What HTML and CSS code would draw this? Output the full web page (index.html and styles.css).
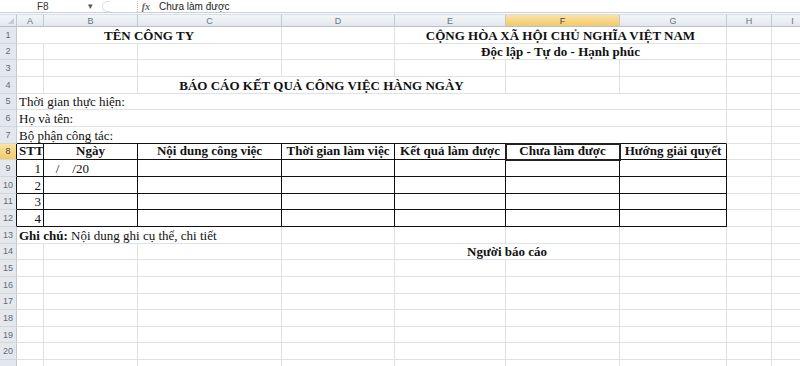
FILE: index.html
```html
<!DOCTYPE html>
<html>
<head>
    <title>Báo cáo công việc</title>
    <link rel="stylesheet" href="styles.css">
</head>
<body>
    <div class="formula-bar">
        <div class="name-box">F8</div>
        <div class="name-arrow">▾</div>
        <div class="fx-zone">
            <span class="fx-bracket"></span>
            <span class="fx">fx</span>
        </div>
        <div class="formula-text">Chưa làm được</div>
    </div>

    <table class="sheet">
        <colgroup>
            <col class="c-head">
            <col class="c-a">
            <col class="c-b">
            <col class="c-c">
            <col class="c-d">
            <col class="c-e">
            <col class="c-f">
            <col class="c-g">
            <col class="c-h">
            <col class="c-i">
        </colgroup>
        <tr class="col-heads">
            <th class="corner"><span class="corner-tri"></span></th>
            <th>A</th><th>B</th><th>C</th><th>D</th><th>E</th>
            <th class="active">F</th><th>G</th><th>H</th><th>I</th>
        </tr>
        <tr>
            <th>1</th>
            <td colspan="3" class="bold center">TÊN CÔNG TY</td>
            <td></td>
            <td colspan="3" class="bold center">CỘNG HÒA XÃ HỘI CHỦ NGHĨA VIỆT NAM</td>
            <td></td><td></td>
        </tr>
        <tr>
            <th>2</th>
            <td></td><td></td><td></td><td></td>
            <td colspan="3" class="bold center">Độc lập - Tự do - Hạnh phúc</td>
            <td></td><td></td>
        </tr>
        <tr>
            <th>3</th>
            <td></td><td></td><td></td><td></td><td></td><td></td><td></td><td></td><td></td>
        </tr>
        <tr>
            <th>4</th>
            <td></td><td></td>
            <td colspan="3" class="bold center">BÁO CÁO KẾT QUẢ CÔNG VIỆC HÀNG NGÀY</td>
            <td></td><td></td><td></td><td></td>
        </tr>
        <tr>
            <th>5</th>
            <td colspan="7">Thời gian thực hiện:</td>
            <td></td><td></td>
        </tr>
        <tr>
            <th>6</th>
            <td colspan="7">Họ và tên:</td>
            <td></td><td></td>
        </tr>
        <tr class="before-table">
            <th>7</th>
            <td colspan="7">Bộ phận công tác:</td>
            <td></td><td></td>
        </tr>
        <tr class="report head-row">
            <th class="active">8</th>
            <td class="bold center">STT</td>
            <td class="bold center">Ngày</td>
            <td class="bold center">Nội dung công việc</td>
            <td class="bold center">Thời gian làm việc</td>
            <td class="bold center">Kết quả làm được</td>
            <td class="bold center selected">Chưa làm được</td>
            <td class="bold center">Hướng giải quyết</td>
            <td></td><td></td>
        </tr>
        <tr class="report">
            <th>9</th>
            <td class="num">1</td>
            <td class="date">   /    /20</td>
            <td></td><td></td><td></td><td></td><td></td>
            <td></td><td></td>
        </tr>
        <tr class="report">
            <th>10</th>
            <td class="num">2</td>
            <td></td><td></td><td></td><td></td><td></td><td></td>
            <td></td><td></td>
        </tr>
        <tr class="report">
            <th>11</th>
            <td class="num">3</td>
            <td></td><td></td><td></td><td></td><td></td><td></td>
            <td></td><td></td>
        </tr>
        <tr class="report last">
            <th>12</th>
            <td class="num">4</td>
            <td></td><td></td><td></td><td></td><td></td><td></td>
            <td></td><td></td>
        </tr>
        <tr>
            <th>13</th>
            <td colspan="3"><b>Ghi chú:</b> Nội dung ghi cụ thể, chi tiết</td>
            <td></td><td></td><td></td><td></td><td></td><td></td>
        </tr>
        <tr>
            <th>14</th>
            <td></td><td></td><td></td><td></td>
            <td colspan="2" class="bold center">Người báo cáo</td>
            <td></td><td></td><td></td>
        </tr>
        <tr><th>15</th><td></td><td></td><td></td><td></td><td></td><td></td><td></td><td></td><td></td></tr>
        <tr><th>16</th><td></td><td></td><td></td><td></td><td></td><td></td><td></td><td></td><td></td></tr>
        <tr><th>17</th><td></td><td></td><td></td><td></td><td></td><td></td><td></td><td></td><td></td></tr>
        <tr><th>18</th><td></td><td></td><td></td><td></td><td></td><td></td><td></td><td></td><td></td></tr>
        <tr><th>19</th><td></td><td></td><td></td><td></td><td></td><td></td><td></td><td></td><td></td></tr>
        <tr><th>20</th><td></td><td></td><td></td><td></td><td></td><td></td><td></td><td></td><td></td></tr>
        <tr><th></th><td></td><td></td><td></td><td></td><td></td><td></td><td></td><td></td><td></td></tr>
    </table>
</body>
</html>
```

FILE: styles.css
```css
* {
    margin: 0;
    padding: 0;
    box-sizing: border-box;
}

body {
    width: 800px;
    height: 366px;
    overflow: hidden;
    background: #fff;
    font-family: 'Liberation Serif', serif;
}

/* formula bar */

.formula-bar {
    height: 13px;
    display: flex;
    align-items: center;
    background: #fff;
    border-bottom: 1px solid #c9ced6;
    font-family: 'Liberation Sans', sans-serif;
    font-size: 10px;
    color: #333;
}

.name-box {
    width: 86px;
    padding-left: 37px;
}

.name-arrow {
    width: 14px;
    font-size: 9px;
    color: #555;
    padding-left: 2px;
}

.fx-zone {
    width: 59px;
    display: flex;
    align-items: center;
    height: 100%;
}

.fx-bracket {
    width: 8px;
    height: 11px;
    border: 1px solid #dde1e6;
    border-right: none;
    border-radius: 6px 0 0 6px;
    margin-left: 2px;
}

.fx {
    margin-left: auto;
    margin-right: 9px;
    font-family: 'Liberation Serif', serif;
    font-style: italic;
    font-weight: bold;
    font-size: 10px;
    color: #666;
    border-left: 1px dotted #bbb;
    padding-left: 4px;
}

.formula-text {
    font-size: 10px;
    color: #222;
}

/* sheet */

.sheet {
    table-layout: fixed;
    border-collapse: separate;
    border-spacing: 0;
    width: 814px;
    margin-top: 1px;
}

.c-head { width: 17px; }
.c-a { width: 27px; }
.c-b { width: 94px; }
.c-c { width: 144px; }
.c-d { width: 113px; }
.c-e { width: 111px; }
.c-f { width: 114px; }
.c-g { width: 107px; }
.c-h { width: 45px; }
.c-i { width: 42px; }

.sheet tr {
    height: 16.67px;
}

.sheet td {
    border-right: 1px solid #dfe2e5;
    border-bottom: 1px solid #dfe2e5;
    font-size: 13px;
    line-height: 14px;
    color: #111;
    padding: 0 2px;
    white-space: nowrap;
    overflow: hidden;
    vertical-align: bottom;
}

.sheet th {
    font-family: 'Liberation Sans', sans-serif;
    font-weight: normal;
    font-size: 9px;
    color: #5d6b7d;
    background: #e4e8ed;
    border-right: 1px solid #c3c9d1;
    border-bottom: 1px solid #d2d7de;
    text-align: center;
    vertical-align: middle;
}

.col-heads {
    height: 13px !important;
}

.col-heads th {
    background: linear-gradient(#f4f6f9, #e3e7ec);
    border-bottom: 1px solid #b9c0c9;
    border-top: 1px solid #d7dce2;
    color: #6a7483;
}

.sheet th.active {
    background: linear-gradient(#fbe3a4, #f3c96a);
    color: #444;
}

.corner {
    position: relative;
}

.corner-tri {
    position: absolute;
    right: 2px;
    bottom: 2px;
    width: 0;
    height: 0;
    border-left: 6px solid transparent;
    border-bottom: 6px solid #c6ccd4;
}

.bold {
    font-weight: bold;
}

.center {
    text-align: center;
}

.num {
    text-align: right;
}

.sheet td.date {
    white-space: pre;
}

/* report table borders */

.before-table td:nth-child(2) {
    border-bottom-color: #111;
}

.report th {
    border-right-color: #111;
}

.report td:nth-child(-n+8) {
    border-right-color: #111;
    border-bottom-color: #111;
}

.head-row td {
    vertical-align: middle;
}

.sheet td.selected {
    outline: 2px solid #222;
    outline-offset: -1px;
}
```
